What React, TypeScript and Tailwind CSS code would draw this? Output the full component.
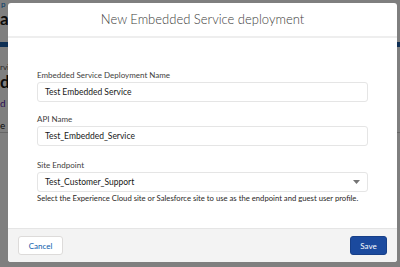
export default function App() {
  return (
    <div
      className="relative w-[400px] h-[267px] overflow-hidden bg-white"
      style={{ fontFamily: 'Lato, "Open Sans", sans-serif' }}
    >
      {/* Page behind the dialog */}
      <div className="flex flex-col text-[#181818]">
        <div className="h-[9px] pl-[1px] text-[8px] leading-[9px] text-[#0176d3]">p</div>
        <div className="h-[20px] text-[17px] font-bold leading-[20px]">ab</div>
        <div className="h-[13px]" />
        <div className="h-[5px] bg-[#1d5fa8]" />
        <div className="h-[15px]" />
        <div className="h-[10px] text-[8px] leading-[10px] text-[#555]">rvi</div>
        <div className="h-[20px] text-[17px] font-bold leading-[20px]">d</div>
        <div className="h-[5px]" />
        <div className="h-[12px] text-[10px] leading-[12px] text-[#5a1ba9]">d b</div>
        <div className="h-[10px]" />
        <div className="h-[14px] border-b border-[#ccc] text-[10px] leading-[12px]">e +</div>
      </div>

      {/* Overlay */}
      <div className="absolute inset-0 bg-[#000]/50" />

      {/* Dialog */}
      <div className="absolute left-[8px] top-[3px] w-[389px] h-[259px] flex flex-col bg-white rounded-[3px] overflow-hidden">
        <div className="h-[35px] flex items-center justify-center border-b-2 border-[#eeeeee]">
          <h2 className="text-[13px] font-light text-[#3e3e3c] leading-none">
            New Embedded Service deployment
          </h2>
        </div>

        <div className="flex-1 flex flex-col px-[29px] pt-[32px]">
          <label className="text-[8px] leading-[10px] text-[#3e3e3c] mb-[2px]">
            Embedded Service Deployment Name
          </label>
          <div className="h-[20px] border border-[#e5e5e5] rounded-[3px] flex items-center px-[7px] text-[8.5px] text-[#181818]">
            Test Embedded Service
          </div>

          <label className="mt-[12px] text-[8px] leading-[10px] text-[#3e3e3c] mb-[2px]">API Name</label>
          <div className="h-[20px] border border-[#e5e5e5] rounded-[3px] flex items-center px-[7px] text-[8.5px] text-[#181818]">
            Test_Embedded_Service
          </div>

          <label className="mt-[14px] text-[8px] leading-[10px] text-[#3e3e3c] mb-[2px]">Site Endpoint</label>
          <div className="h-[20px] border border-[#e5e5e5] rounded-[3px] flex items-center justify-between px-[7px] text-[8.5px] text-[#181818]">
            <span>Test_Customer_Support</span>
            <svg width="7" height="4" viewBox="0 0 7 4">
              <path d="M0 0 H7 L3.5 4 Z" fill="#747474" />
            </svg>
          </div>
          <p className="mt-[1px] text-[7.7px] leading-[10px] text-[#2b2826]">
            Select the Experience Cloud site or Salesforce site to use as the endpoint and guest user profile.
          </p>
        </div>

        <div className="h-[34px] flex items-center justify-between px-[10px] bg-[#f3f3f3] border-t border-[#e5e5e5]">
          <button className="h-[19px] w-[45px] bg-white border border-[#dddbda] rounded-[3px] text-[8px] text-[#0b5cab]">
            Cancel
          </button>
          <button className="h-[19px] w-[37px] bg-[#1b4a9e] border border-[#173f88] rounded-[3px] text-[8px] text-white">
            Save
          </button>
        </div>
      </div>
    </div>
  );
}
